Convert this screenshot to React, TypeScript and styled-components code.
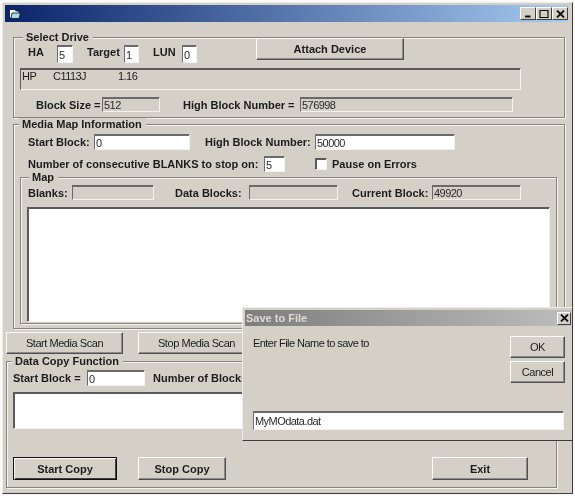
import React from 'react'
import styled, { createGlobalStyle } from 'styled-components'

const Global = createGlobalStyle`
html, body {
    margin: 0;
    padding: 0;
    background: #fbfbf9;
}
* {
    box-sizing: border-box;
}
`

const Page = styled.div`
position: relative;
width: 575px;
height: 496px;
padding: 2px;
font-family: "Liberation Sans", Arial, sans-serif;
font-size: 11px;
letter-spacing: -0.55px;
color: #1c1c1c;
overflow: hidden;
filter: blur(0.3px);
`
const Window = styled.div`
width: 571px;
height: 492px;
padding: 2px 4px 2px 2px;
background: #d4d0c8;
border: 1px solid;
border-color: #eeece6 #3c3c3c #3c3c3c #eeece6;
`
const TitleBar = styled.div`
height: 17px;
display: flex;
align-items: center;
justify-content: space-between;
padding: 0 0 0 4px;
background: linear-gradient(90deg, #0a246a, #a6caf0);
`
const CaptionGroup = styled.div`
display: flex;
gap: 0;
`
const CaptionBtn = styled.div`
width: 16px;
height: 13px;
display: flex;
align-items: center;
justify-content: center;
background: #d4d0c8;
border: 1px solid;
border-color: #fff #404040 #404040 #fff;
`
const Group = styled.div<{ $left: number; $top: number; $w: number; $h: number }>`
position: relative;
margin-left: ${p => p.$left}px;
margin-top: ${p => p.$top}px;
width: ${p => p.$w}px;
height: ${p => p.$h}px;
border: 1px solid #86837c;
box-shadow: inset 1px 1px 0 #f4f3ef, 1px 1px 0 #f4f3ef;
`
const Legend = styled.span<{ $left: number }>`
position: absolute;
left: ${p => p.$left}px;
top: -7px;
padding: 0 4px 0 3px;
line-height: 13px;
background: #d4d0c8;
font-weight: bold;
letter-spacing: 0;
white-space: nowrap;
`
const Row = styled.div<{ $top: number; $left: number; $h?: number; $end?: boolean }>`
display: flex;
align-items: ${p => (p.$end ? 'flex-end' : 'center')};
margin-top: ${p => p.$top}px;
padding-left: ${p => p.$left}px;
height: ${p => (p.$h ? `${p.$h}px` : 'auto')};
`
const Label = styled.span<{ $w: number; $gap?: number; $lift?: number }>`
width: ${p => p.$w}px;
margin-left: ${p => p.$gap || 0}px;
margin-bottom: ${p => p.$lift || 0}px;
font-weight: bold;
letter-spacing: 0;
white-space: nowrap;
`
const Field = styled.input<{ $w: number; $h: number; $gap?: number; $flat?: boolean }>`
display: block;
width: ${p => p.$w}px;
height: ${p => p.$h}px;
margin: 0 0 0 ${p => p.$gap || 0}px;
padding: 1px 0 0 1px;
font: 11px "Liberation Sans", Arial, sans-serif;
letter-spacing: -0.55px;
color: #2a2a2a;
background: ${p => (p.$flat ? '#d4d0c8' : '#fff')};
border: 1px solid;
border-color: #6a6a6a #f4f3ef #f4f3ef #6a6a6a;
box-shadow: inset 0 1px 0 #6a6a6a;
outline: none;
`
const TextArea = styled.textarea<{ $w: number; $h: number; $left: number; $top: number }>`
display: block;
width: ${p => p.$w}px;
height: ${p => p.$h}px;
margin: ${p => p.$top}px 0 0 ${p => p.$left}px;
padding: 0;
background: #fff;
border: 1px solid;
border-color: #5a5a5a #f4f3ef #f4f3ef #5a5a5a;
box-shadow: inset 1px 1px 0 #5a5a5a;
resize: none;
outline: none;
`
const ListBox = styled.div`
display: flex;
width: 501px;
height: 22px;
margin: 5px 0 0 6px;
padding: 1px 0 0 1px;
border: 1px solid;
border-color: #5a5a5a #f4f3ef #f4f3ef #5a5a5a;
box-shadow: inset 0 1px 0 #5a5a5a;
`
const ListCell = styled.span<{ $w: number }>`
width: ${p => p.$w}px;
`
const Button = styled.button<{ $w: number; $h: number; $gap?: number; $lift?: number; $bold?: boolean; $main?: boolean }>`
flex: none;
width: ${p => p.$w}px;
height: ${p => p.$h}px;
margin: 0 0 ${p => p.$lift || 0}px ${p => p.$gap || 0}px;
padding: 0;
font: ${p => (p.$bold ? 'bold' : 'normal')} 11px "Liberation Sans", Arial, sans-serif;
letter-spacing: ${p => (p.$bold ? '0' : '-0.45px')};
color: #1c1c1c;
background: #d4d0c8;
border: 1px solid;
border-color: ${p => (p.$main ? '#111' : '#fbfbf9 #505050 #505050 #fbfbf9')};
box-shadow: ${p => (p.$main ? 'inset 1px 1px 0 #fbfbf9, inset -1px -1px 0 #404040' : 'inset -1px -1px 0 #8a8a8a')};
`
const CheckBox = styled.span`
width: 12px;
height: 12px;
margin-left: 30px;
background: #fff;
border: 1px solid;
border-color: #5a5a5a #f4f3ef #f4f3ef #5a5a5a;
box-shadow: inset 1px 1px 0 #5a5a5a;
`
const ScanRow = styled.div`
display: flex;
margin: 3px 0 0 1px;
`
const CopyButtons = styled.div`
display: flex;
margin: 28px 0 0 6px;
`
const Dialog = styled.div`
position: absolute;
left: 242px;
top: 307px;
width: 331px;
height: 134px;
padding: 2px 1px 2px 2px;
background: #d4d0c8;
border: 1px solid;
border-color: #eeece6 #3c3c3c #3c3c3c #eeece6;
`
const DialogTitle = styled.div`
height: 16px;
display: flex;
align-items: center;
justify-content: space-between;
padding: 0 0 0 1px;
background: linear-gradient(90deg, #7e7e7e, #bdbdbd);
color: #dedbd4;
font-weight: bold;
letter-spacing: 0;
`
const DialogClose = styled(CaptionBtn)`
width: 14px;
height: 13px;
`
const DialogBody = styled.div`
display: flex;
justify-content: space-between;
padding: 10px 6px 0 8px;
`
const DialogText = styled.span`
margin-top: 1px;
`
const DialogButtons = styled.div`
display: flex;
flex-direction: column;
gap: 3px;
`
const DialogInput = styled.div`
margin: 28px 0 0 8px;
`

function CloseGlyph() {
    return (
        <svg width="9" height="8" viewBox="0 0 9 8">
            <path d="M1 0.5 L8 7.5 M8 0.5 L1 7.5" stroke="#111" strokeWidth="1.8" fill="none" />
        </svg>
    )
}

function App() {
    return (
        <Page>
            <Global />
            <Window>
                <TitleBar>
                    <svg width="12" height="10" viewBox="0 0 12 10">
                        <path d="M0.5 0.5 H6 L7 2 H10 V9 H0.5 Z" fill="#f2f8f8" stroke="#05102e" strokeWidth="0.8" />
                        <path d="M3 4 H11.5 L10 9.5 H2 Z" fill="#a8dce2" stroke="#05102e" strokeWidth="0.8" />
                    </svg>
                    <CaptionGroup>
                        <CaptionBtn>
                            <svg width="8" height="8" viewBox="0 0 8 8"><path d="M1 6.5 H6.5" stroke="#111" strokeWidth="2" /></svg>
                        </CaptionBtn>
                        <CaptionBtn>
                            <svg width="10" height="9" viewBox="0 0 10 9"><path d="M0.5 1.5 H9.5 M1 1 V8.5 H9 V1" stroke="#111" strokeWidth="1.2" fill="none" /></svg>
                        </CaptionBtn>
                        <CaptionBtn><CloseGlyph /></CaptionBtn>
                    </CaptionGroup>
                </TitleBar>

                <Group $left={8} $top={15} $w={552} $h={81}>
                    <Legend $left={9}>Select Drive</Legend>
                    <Row $top={0} $left={14} $h={25} $end>
                        <Label $w={29} $lift={5}>HA</Label>
                        <Field $w={16} $h={18} defaultValue="5" />
                        <Label $w={37} $gap={14} $lift={5}>Target</Label>
                        <Field $w={15} $h={18} defaultValue="1" />
                        <Label $w={29} $gap={14} $lift={5}>LUN</Label>
                        <Field $w={15} $h={18} defaultValue="0" />
                        <Button $w={148} $h={22} $gap={59} $lift={3} $bold>Attach Device</Button>
                    </Row>
                    <ListBox>
                        <ListCell $w={31}>HP</ListCell>
                        <ListCell $w={65}>C1113J</ListCell>
                        <ListCell $w={40}>1.16</ListCell>
                    </ListBox>
                    <Row $top={7} $left={22}>
                        <Label $w={66}>Block Size =</Label>
                        <Field $w={58} $h={15} $flat defaultValue="512" />
                        <Label $w={117} $gap={23}>High Block Number =</Label>
                        <Field $w={213} $h={15} $flat defaultValue="576998" />
                    </Row>
                </Group>

                <Group $left={8} $top={6} $w={552} $h={205}>
                    <Legend $left={5}>Media Map Information</Legend>
                    <Row $top={9} $left={14}>
                        <Label $w={66}>Start Block:</Label>
                        <Field $w={96} $h={16} defaultValue="0" />
                        <Label $w={110} $gap={15}>High Block Number:</Label>
                        <Field $w={140} $h={16} defaultValue="50000" />
                    </Row>
                    <Row $top={6} $left={14}>
                        <Label $w={236}>Number of consecutive BLANKS to stop on:</Label>
                        <Field $w={21} $h={16} defaultValue="5" />
                        <CheckBox />
                        <Label $w={90} $gap={5}>Pause on Errors</Label>
                    </Row>
                    <Group $left={6} $top={5} $w={537} $h={147}>
                        <Legend $left={8}>Map</Legend>
                        <Row $top={7} $left={7}>
                            <Label $w={44}>Blanks:</Label>
                            <Field $w={82} $h={15} $flat />
                            <Label $w={74} $gap={21}>Data Blocks:</Label>
                            <Field $w={89} $h={15} $flat />
                            <Label $w={80} $gap={14}>Current Block:</Label>
                            <Field $w={89} $h={15} $flat defaultValue="49920" />
                        </Row>
                        <TextArea $w={523} $h={115} $left={6} $top={7} />
                    </Group>
                </Group>

                <ScanRow>
                    <Button $w={117} $h={22}>Start Media Scan</Button>
                    <Button $w={117} $h={22} $gap={15}>Stop Media Scan</Button>
                </ScanRow>

                <Group $left={1} $top={7} $w={551} $h={127}>
                    <Legend $left={5}>Data Copy Function</Legend>
                    <Row $top={8} $left={6}>
                        <Label $w={74}>Start Block =</Label>
                        <Field $w={58} $h={16} defaultValue="0" />
                        <Label $w={100} $gap={8}>Number of Blocks:</Label>
                    </Row>
                    <TextArea $w={530} $h={37} $left={6} $top={6} />
                    <CopyButtons>
                        <Button $w={104} $h={23} $bold $main>Start Copy</Button>
                        <Button $w={88} $h={23} $gap={21} $bold>Stop Copy</Button>
                        <Button $w={96} $h={23} $gap={206} $bold>Exit</Button>
                    </CopyButtons>
                </Group>
            </Window>

            <Dialog>
                <DialogTitle>
                    Save to File
                    <DialogClose><CloseGlyph /></DialogClose>
                </DialogTitle>
                <DialogBody>
                    <DialogText>Enter File Name to save to</DialogText>
                    <DialogButtons>
                        <Button $w={55} $h={22}>OK</Button>
                        <Button $w={55} $h={22}>Cancel</Button>
                    </DialogButtons>
                </DialogBody>
                <DialogInput>
                    <Field $w={311} $h={19} defaultValue="MyMOdata.dat" />
                </DialogInput>
            </Dialog>
        </Page>
    )
}

export default App
